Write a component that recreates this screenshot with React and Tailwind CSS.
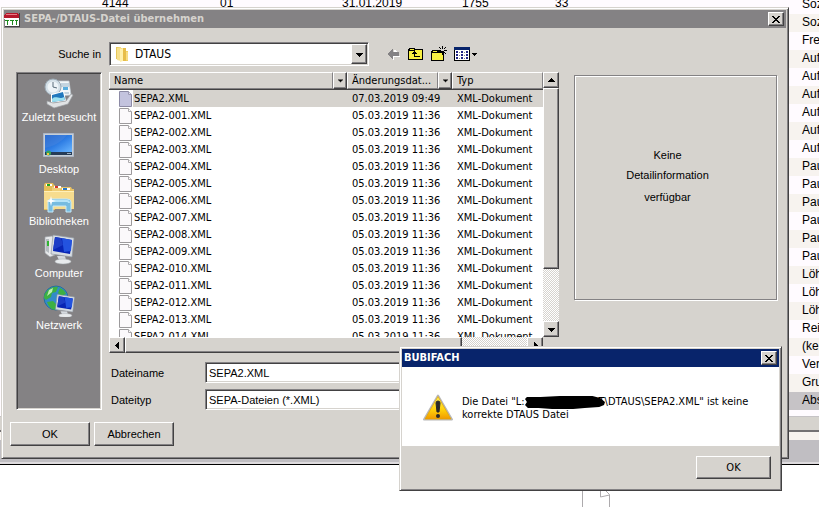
import React, { useState } from "react";

const files = [
  { name: "SEPA2.XML", date: "07.03.2019 09:49" },
  ...Array.from({ length: 14 }, (_, i) => ({
    name: `SEPA2-${String(i + 1).padStart(3, "0")}.XML`,
    date: "05.03.2019 11:36",
  })),
];

const accounts = [
  "Soz", "Soz", "Fre", "Auf", "Auf", "Auf", "Auf", "Auf", "Auf", "Pau", "Pau", "Pau",
  "Pau", "Pau", "Pau", "Löh", "Löh", "Löh", "Rei", "(kei", "Ver", "Gru", "Abs",
];

const raised =
  "bg-[#d6d3ce] border border-t-white border-l-white border-r-[#424142] border-b-[#424142] shadow-[inset_-1px_-1px_0_#848284]";
const sunken =
  "bg-white border border-t-[#848284] border-l-[#848284] border-r-white border-b-white shadow-[inset_1px_1px_0_#424142,inset_-1px_-1px_0_#d6d3ce]";
const windowFrame =
  "bg-[#d6d3ce] border border-t-[#d6d3ce] border-l-[#d6d3ce] border-r-[#424142] border-b-[#424142] shadow-[inset_1px_1px_0_#fff,inset_-1px_-1px_0_#848284] p-0.5";
const dither =
  "bg-[conic-gradient(#fff_25%,#d6d3ce_0_50%,#fff_0_75%,#d6d3ce_0)] bg-[length:2px_2px]";

// Small black triangle used by combo boxes, headers and scrollbars
const Arrow = ({ dir = "down", small }) => {
  const paths = {
    down: "M0 2h7v1h-1v1h-1v1h-1v1h-1v-1h-1v-1h-1v-1h-1z",
    up: "M3 1h1v1h1v1h1v1h1v1h-7v-1h1v-1h1v-1h1z",
    left: "M5 0v7h-1v-1h-1v-1h-1v-1h-1v-1h1v-1h1v-1h1v-1z",
    right: "M2 0v7h1v-1h1v-1h1v-1h1v-1h-1v-1h-1v-1h-1v-1z",
  };
  return (
    <svg
      viewBox="0 0 7 7"
      className={small ? "w-[5px] h-[5px]" : "w-[7px] h-[7px]"}
      shapeRendering={small ? "auto" : "crispEdges"}
    >
      <path d={paths[dir]} />
    </svg>
  );
};

const CloseButton = () => (
  <button aria-label="Schließen" className={`${raised} flex items-center justify-center w-4 h-3.5 shrink-0`}>
    <svg width="8" height="7" viewBox="0 0 8 7" shapeRendering="crispEdges">
      <path d="M0 0h2v1h1v1h2v-1h1v-1h2v1h-1v1h-1v1h-1v1h1v1h1v1h1v1h-2v-1h-1v-1h-2v1h-1v1h-2v-1h1v-1h1v-1h1v-1h-1v-1h-1v-1h-1z" />
    </svg>
  </button>
);

const ScrollButton = ({ dir }) => (
  <button aria-label={dir} className={`${raised} flex items-center justify-center w-4 h-4 shrink-0`}>
    <Arrow dir={dir} />
  </button>
);

const AppIcon = () => (
  <svg width="17" height="17" viewBox="0 0 17 17" shapeRendering="crispEdges">
    <path d="M1 3h14v12H1z" fill="#fff" />
    <path d="M15 2h1v14h-1zM1 15h15v1H1z" fill="#424142" />
    <path d="M2 2h12v1h1v4H0V4h1V3h1z" fill="#b5182c" />
    <path d="M2 3h11v1H2z" fill="#e77a84" />
    <path d="M0 7h15v1H0z" fill="#fff" />
    <path d="M1 9h4v1H4v4H3v-4H1zM6 9h4v1H9v4H8v-4H6zM11 9h3v1h-1v4h-1v-4h-1z" fill="#1d8a1d" />
  </svg>
);

const FolderIcon = () => (
  <svg width="14" height="16" viewBox="0 0 14 16" className="shrink-0">
    <path d="M1 1h5v13l-5-1z" fill="#e7c75a" />
    <path d="M2 2l4-1v14l-4-1z" fill="#f7e08c" />
    <path d="M6 2h5v3h2v10H6z" fill="#efcf63" />
    <path d="M5 3l3-1v13l-3 1z" fill="#fff0ad" />
    <path d="M8 2h3v13H8z" fill="#e7bd4a" />
    <path d="M11 6h2v8h-2z" fill="#f7dc84" />
  </svg>
);

const FileIcon = ({ selected }) => (
  <svg width="13" height="17" viewBox="0 0 13 17" className="block">
    <path d="M.5 1.5h9l3 3v12H.5z" fill={selected ? "#c3c3de" : "#fbf9fb"} stroke={selected ? "#8c8aa5" : "#9c9a9c"} />
    <path d="M9.5 1.5v3h3" fill={selected ? "#dedeef" : "#fff"} stroke={selected ? "#9c9ab5" : "#adaaad"} />
  </svg>
);

const RecentIcon = () => (
  <svg width="32" height="32" viewBox="0 0 32 32">
    <path d="M14 4h12l2 14-12 1z" fill="#f4f7f9" stroke="#bdc7ce" strokeWidth=".7" />
    <path d="M18 7h8M18 9h8M18 16h8" stroke="#94b2c6" />
    <path d="M20 10h5v3h-5z" fill="#5aaede" />
    <circle cx="10" cy="10" r="8" fill="#d3dfe7" stroke="#9caab5" />
    <circle cx="10" cy="10" r="5.500" fill="#eef4f8" />
    <path d="M10 5v5l4 1" stroke="#5a6d7b" fill="none" />
    <path d="M8 17l13-3 2 10-15 2z" fill="#fff" />
    <path d="M9 18l11-3 2 8-13 2z" fill="#2178bd" />
    <path d="M9 22c4-4 7 1 12-2l1 3-13 2z" fill="#9ce0ef" />
    <path d="M4 24l6 2 13-2 5-7 2 1-5 9-14 4-7-4z" fill="#e1e3e5" stroke="#9ca1a5" strokeWidth=".7" />
  </svg>
);

const DesktopIcon = () => (
  <svg width="32" height="32" viewBox="0 0 32 32">
    <defs>
      <linearGradient id="desk" x1="0" y1="0" x2="1" y2="1">
        <stop offset="0" stopColor="#1854bd" />
        <stop offset=".5" stopColor="#2e7de4" />
        <stop offset="1" stopColor="#69b5ff" />
      </linearGradient>
    </defs>
    <path d="M.5 4.500h30v23H.5z" fill="#c6cfd6" stroke="#adb6c6" />
    <path d="M2 6h27v17H2z" fill="url(#desk)" />
    <path d="M2 6h22C17 15 9 17 2 19z" fill="#4785e0" opacity=".5" />
    <path d="M2 23h27v3H2z" fill="#253b57" />
    <circle cx="5.500" cy="24" r="2.500" fill="#37a25c" />
    <path d="M4 24h2v2H4z" fill="#f5c43d" />
    <path d="M24 24h4v1h-4z" fill="#9bb0c5" />
  </svg>
);

const LibraryIcon = () => (
  <svg width="32" height="32" viewBox="0 0 32 32">
    <path d="M1 4l1-2h8l1 2h1v25H1z" fill="#e5bd59" />
    <path d="M3 3h6v2H3z" fill="#fff" />
    <path d="M4 3h3v2H4z" fill="#21a621" />
    <path d="M9 6h11v22H9z" fill="#efcf78" />
    <path d="M11 5h7v2h-7z" fill="#fff" />
    <path d="M12 5h3v2h-3z" fill="#d63929" />
    <path d="M17 8h1l1-2h9l1 2h2v20H17z" fill="#e8c265" />
    <path d="M19 7h8v2h-8z" fill="#fff" />
    <path d="M20 7h4v2h-4z" fill="#2979c6" />
    <path d="M1 10h30v18H1z" fill="#f7dc8e" />
    <path d="M1 10h30v1H1z" fill="#fff0b8" />
    <path d="M5 31V21q0-3 3-3h16q4 0 4 3v10h-5v-6H10v6z" fill="#77bce0" stroke="#c5e9fa" />
    <path d="M7 21q0-1 2-1h15q2 0 2 2" stroke="#b5e4f9" strokeWidth="2" fill="none" />
    <path d="M8 15l1 4 4 1-4 1-1 4-1-4-4-1 4-1z" fill="#fff" />
  </svg>
);

// Tilted monitor shared by the computer and network icons
const Monitor = () => (
  <>
    <path d="M14 23h8l1 4h3v3H13v-3h3z" fill="#d6dbe0" />
    <ellipse cx="20" cy="28.500" rx="8" ry="2.500" fill="#e8ebed" stroke="#a5aaae" strokeWidth=".5" />
    <path d="M10 2l21 3-2 19-21-3z" fill="#d7dde2" stroke="#929aa2" strokeWidth=".7" />
    <path d="M12 4l17 3-2 14-17-3z" fill="#0825b4" />
    <path d="M19 5l10 2-1 11-7 1z" fill="#2353df" />
    <path d="M12 4l6 1 2 7-10 5z" fill="#1c3dc6" />
  </>
);

const ComputerIcon = () => (
  <svg width="32" height="32" viewBox="0 0 32 32">
    <path d="M2 4l7-1 3 2v17l-5 2-5-4z" fill="#e7e9eb" stroke="#9ca1a6" strokeWidth=".7" />
    <path d="M3 6h3v14l-3-2z" fill="#b5bbc0" />
    <path d="M4 8h2v5H4z" fill="#31b531" />
    <Monitor />
  </svg>
);

const NetworkIcon = () => (
  <svg width="32" height="32" viewBox="0 0 32 32">
    <circle cx="13" cy="13" r="12" fill="#338bc9" stroke="#166393" strokeWidth=".7" />
    <path d="M5 5q5-4 10-3l-2 5-4 1-1 4-5 3-2-2q0-5 4-8zM17 3q5 2 6 6l-5 2-3-3zM4 17l6-1 4 4-2 5q-6-1-8-8z" fill="#3cb043" />
    <path d="M6 5l4-2-1 4-5 4z" fill="#c1efb4" />
    <g transform="translate(6 8) scale(.82 .79)">
      <Monitor />
    </g>
  </svg>
);

const WarningIcon = () => (
  <svg width="32" height="32" viewBox="0 0 32 32" className="shrink-0">
    <defs>
      <linearGradient id="warn" x1="0" y1="0" x2="0" y2="1">
        <stop offset="0" stopColor="#fff35a" />
        <stop offset=".6" stopColor="#ffcf08" />
        <stop offset="1" stopColor="#f09a00" />
      </linearGradient>
    </defs>
    <path d="M16 4.500L30 28.500H2z" fill="#b8b8b8" stroke="#b8b8b8" strokeWidth="2" strokeLinejoin="round" />
    <path d="M16 5.500L29 28H3z" fill="url(#warn)" stroke="#e7a500" strokeWidth=".7" strokeLinejoin="round" />
    <path d="M14 12q0-2 2-2t2 2l-1 9h-2z" fill="#292829" stroke="#292829" />
    <circle cx="16" cy="25" r="2" fill="#292829" />
  </svg>
);

const BackIcon = () => (
  <svg width="14" height="12" viewBox="0 0 14 12" shapeRendering="crispEdges">
    <path d="M6 1h1v4h6v4H7v3H6v-1H5v-1H4V9H3V8h10V5z" fill="#fff" />
    <path d="M5 1h1v3h6v4H6v3H5v-1H4V9H3V8H2V7H1V6H0h1V5h1V4h1V3h1V2h1z" fill="#848284" />
  </svg>
);

const UpFolderIcon = () => (
  <svg width="16" height="14" viewBox="0 0 16 14" shapeRendering="crispEdges">
    <path d="M.5 2.500h1v-1h5v1h8v10H.5z" fill="#f7ef42" stroke="#000" />
    <path d="M1 3.500h6" stroke="#000" />
    <path d="M6 4h1v1h1v1h1v1H7v2h5v1H6V7H4V6h1V5h1z" />
  </svg>
);

const NewFolderIcon = () => (
  <svg width="16" height="16" viewBox="0 0 16 16" shapeRendering="crispEdges">
    <path d="M.5 5.500h1v-1h5v1h6v9H.5z" fill="#f7ef42" stroke="#000" />
    <path d="M1 6.500h10" stroke="#000" />
    <path d="M11 0h1v3h-1zM11 6h1v3h-1zM7 4h3v1H7zM13 4h3v1h-3zM8 1h1v1H8zM9 2h1v1H9zM14 1h1v1h-1zM13 2h1v1h-1zM14 7h1v1h-1zM13 6h1v1h-1z" />
  </svg>
);

const ViewIcon = () => (
  <svg width="24" height="14" viewBox="0 0 24 14" shapeRendering="crispEdges">
    <path d="M.5.5h15v13H.5z" fill="#fff" stroke="#000" />
    <path d="M0 0h16v3H0z" fill="#08246b" />
    <path d="M2 4h2v2H2zM2 7h2v2H2zM2 10h2v2H2zM7 4h2v2H7zM7 7h2v2H7zM7 10h2v2H7zM12 4h2v2h-2zM12 7h2v2h-2zM12 10h2v2h-2z" fill="#212484" />
    <path d="M5 5h1v1H5zM5 8h1v1H5zM5 11h1v1H5zM10 5h1v1h-1zM10 8h1v1h-1zM10 11h1v1h-1z" fill="#848284" />
    <path d="M18 6h5v1h-1v1h-1v1h-1V8h-1V7h-1z" />
  </svg>
);

const places = [
  { label: "Zuletzt besucht", icon: <RecentIcon /> },
  { label: "Desktop", icon: <DesktopIcon /> },
  { label: "Bibliotheken", icon: <LibraryIcon /> },
  { label: "Computer", icon: <ComputerIcon /> },
  { label: "Netzwerk", icon: <NetworkIcon /> },
];

const toolbar = [
  { label: "Zurück", icon: <BackIcon /> },
  { label: "Übergeordneter Ordner", icon: <UpFolderIcon /> },
  { label: "Neuer Ordner", icon: <NewFolderIcon /> },
  { label: "Ansicht", icon: <ViewIcon /> },
];

const HeaderCell = ({ children, menu }) => (
  <div className="flex h-[18px] border-b border-[#424142]">
    <span className="flex-1 bg-[#d6d3ce] border-t border-l border-white border-b border-b-[#848284] border-r border-r-[#848284] pl-1 leading-4 truncate">
      {children}
    </span>
    {menu && (
      <button aria-label="Filter" className={`${raised} w-3.5 flex items-center justify-center`}>
        <Arrow small />
      </button>
    )}
  </div>
);

const FileList = () => {
  const [selected, setSelected] = useState("SEPA2.XML");

  return (
    <div className="flex-1 min-w-0 font-['DejaVu_Sans_Condensed','DejaVu_Sans',sans-serif]">
      <div className="flex">
        <div className="flex-1 min-w-0 h-[265px] overflow-hidden bg-white">
          <table className="w-full table-fixed border-collapse text-left">
            <colgroup>
              <col className="w-6" />
              <col />
              <col className="w-[105px]" />
              <col className="w-[91px]" />
            </colgroup>
            <thead>
              <tr>
                <th colSpan="2" className="p-0 font-normal"><HeaderCell menu>Name</HeaderCell></th>
                <th className="p-0 font-normal"><HeaderCell menu>Änderungsdat...</HeaderCell></th>
                <th className="p-0 font-normal"><HeaderCell>Typ</HeaderCell></th>
              </tr>
            </thead>
            <tbody>
              {files.map((file) => {
                const bg = file.name === selected ? "bg-[#d6d3ce]" : "";
                return (
                  <tr key={file.name} className="h-[17px] leading-[17px] whitespace-nowrap" onClick={() => setSelected(file.name)}>
                    <td className="p-0 pl-2.5"><FileIcon selected={file.name === selected} /></td>
                    <td className={`p-0 pl-px ${bg}`}>{file.name}</td>
                    <td className={`p-0 pl-[5px] ${bg}`}>{file.date}</td>
                    <td className={`p-0 pl-[5px] ${bg}`}>XML-Dokument</td>
                  </tr>
                );
              })}
            </tbody>
          </table>
        </div>
        <div className={`flex flex-col w-4 ${dither}`}>
          <ScrollButton dir="up" />
          <div className={`${raised} h-[181px]`} />
          <div className="flex-1" />
          <ScrollButton dir="down" />
        </div>
      </div>
      <div className="flex pr-4">
        <div className={`flex flex-1 ${dither}`}>
          <ScrollButton dir="left" />
          <div className={`${raised} w-[337px]`} />
          <div className="flex-1" />
          <ScrollButton dir="right" />
        </div>
      </div>
    </div>
  );
};

const OpenDialog = () => (
  <section role="dialog" aria-label="SEPA-/DTAUS-Datei übernehmen" className={`absolute top-[7px] left-px right-[30px] ${windowFrame}`}>
    <header className="flex items-center h-[18px] bg-[#848284] pr-0.5">
      <AppIcon />
      <h1 className="flex-1 pl-[3px] font-bold text-[#d6d3ce] font-['DejaVu_Sans_Condensed','DejaVu_Sans',sans-serif]">
        SEPA-/DTAUS-Datei übernehmen
      </h1>
      <CloseButton />
    </header>

    <div className="flex items-center pt-3.5">
      <label htmlFor="folder" className="w-[97px] text-right">Suche in</label>
      <div className={`${sunken} flex items-center ml-2 w-[260px] h-6 pl-[5px] pr-px`}>
        <FolderIcon />
        <select id="folder" className="flex-1 appearance-none bg-transparent pl-1.5 text-[12px] outline-none font-['DejaVu_Sans_Condensed','DejaVu_Sans',sans-serif]">
          <option>DTAUS</option>
        </select>
        <button aria-label="Ordnerliste öffnen" className={`${raised} w-4 h-5 flex items-center justify-center`}>
          <Arrow />
        </button>
      </div>
      <div className="flex items-center gap-[7px] pl-[18px]">
        {toolbar.map((tool) => (
          <button key={tool.label} aria-label={tool.label}>{tool.icon}</button>
        ))}
      </div>
    </div>

    <div className="flex gap-[7px] pt-1.5 pl-3 pr-[9px]">
      <nav className="w-[86px] shrink-0 bg-[#848284] border border-t-[#848284] border-l-[#848284] border-r-white border-b-white shadow-[inset_1px_1px_0_#424142,inset_-1px_-1px_0_#d6d3ce] pt-1">
        {places.map((place) => (
          <button key={place.label} className="flex flex-col items-center w-full h-[52px] text-white">
            {place.icon}
            <span className="leading-4 whitespace-nowrap">{place.label}</span>
          </button>
        ))}
      </nav>

      <div className="flex-1 min-w-0">
        <div className="flex gap-[15px]">
          <FileList />
          <aside className="w-[203px] h-[225px] mt-[3px] shrink-0 border border-[#848284] shadow-[inset_1px_1px_0_#fff,1px_1px_0_#fff] pt-[69px] pr-4 text-center">
            <p className="leading-5">Keine</p>
            <p className="leading-5">Detailinformation</p>
            <p className="pt-0.5 leading-5">verfügbar</p>
          </aside>
        </div>
        <div className="grid grid-cols-[96px_354px] items-center gap-y-1.5 pt-[9px]">
          <label htmlFor="filename" className="pl-0.5">Dateiname</label>
          <input id="filename" defaultValue="SEPA2.XML" className={`${sunken} h-[21px] pl-[3px]`} />
          <label htmlFor="filetype" className="pl-0.5">Dateityp</label>
          <select id="filetype" className={`${sunken} h-[21px] pl-[3px] appearance-none`}>
            <option>SEPA-Dateien (*.XML)</option>
          </select>
        </div>
      </div>
    </div>

    <footer className="flex gap-1 pt-3 pl-1.5 pb-2.5">
      <button className={`${raised} w-20 h-6`}>OK</button>
      <button className={`${raised} w-20 h-6`}>Abbrechen</button>
    </footer>
  </section>
);

const ErrorDialog = () => (
  <section role="alertdialog" aria-label="BUBIFACH" className={`absolute top-[346px] right-[37px] w-[383px] ${windowFrame} font-['DejaVu_Sans_Condensed','DejaVu_Sans',sans-serif]`}>
    <header className="flex items-center h-[18px] bg-[#08246b] pl-0.5 pr-0.5">
      <h2 className="flex-1 font-bold text-white">BUBIFACH</h2>
      <CloseButton />
    </header>
    <div className="flex items-start h-[79px] bg-white pt-6 pl-5 gap-2">
      <WarningIcon />
      <p className="pt-1 leading-[13px] whitespace-nowrap">
        Die Datei "L:
        <svg width="80" height="13" viewBox="0 0 83 13" preserveAspectRatio="none" className="inline-block -my-1 -mr-1.5 align-middle">
          <path d="M2 1h14l20-1h34l8 2 5 4-1 3-5 2-15 1-12 1H28L14 12H3L0 9l2-3-2-3z" />
        </svg>
        T\DTAUS\SEPA2.XML" ist keine
        <br />
        korrekte DTAUS Datei
      </p>
    </div>
    <footer className="flex justify-end pt-2.5 pr-2 pb-[9px]">
      <button className={`${raised} w-[75px] h-[23px]`}>OK</button>
    </footer>
  </section>
);

const App = () => (
  <main className="relative min-h-screen overflow-hidden bg-white text-[11px] leading-[14px] text-black font-['Liberation_Sans',Arial,sans-serif]">
    {/* Booking window behind the dialogs */}
    <div className="flex h-[416px] overflow-hidden bg-[#fffbff] text-[12px]">
      <table className="flex-1 -mt-1 self-start table-fixed">
        <tbody>
          <tr className="flex h-[18px] leading-[15px]">
            <td className="w-[220px] pl-[102px]">4144</td>
            <td className="w-[122px]">01</td>
            <td className="w-[120px]">31.01.2019</td>
            <td className="w-[93px]">1755</td>
            <td>33</td>
          </tr>
        </tbody>
      </table>
      <ul className="-mt-1 w-[30px]">
        {accounts.map((account, i) => (
          <li
            key={i}
            className={`h-[18px] pl-[13px] leading-4 overflow-hidden ${
              i === accounts.length - 1 ? "bg-[#c6c3c6]" : i % 2 ? "bg-[#f7f3ef]" : "bg-[#fffbff]"
            }`}
          >
            {account}
          </li>
        ))}
      </ul>
    </div>
    <div className="h-4 bg-[#d6d3ce] border-t border-[#c6c3c6] border-b-2 border-b-[#737173]" />
    <div className="h-2 bg-[#f7f3ef]" />
    <div className="h-6 bg-[#c0bec2] border-b-2 border-[#dedbde]" />
    <div className="h-px bg-black" />
    <div className="flex pt-5 pl-[582px]">
      <svg width="28" height="22" viewBox="0 0 28 22" fill="none" stroke="#adaaad">
        <path d="M.5 22V.5h18l9 9V22M18.500 1v11l9-2" />
      </svg>
    </div>

    <OpenDialog />
    <ErrorDialog />
  </main>
);

export default App;
